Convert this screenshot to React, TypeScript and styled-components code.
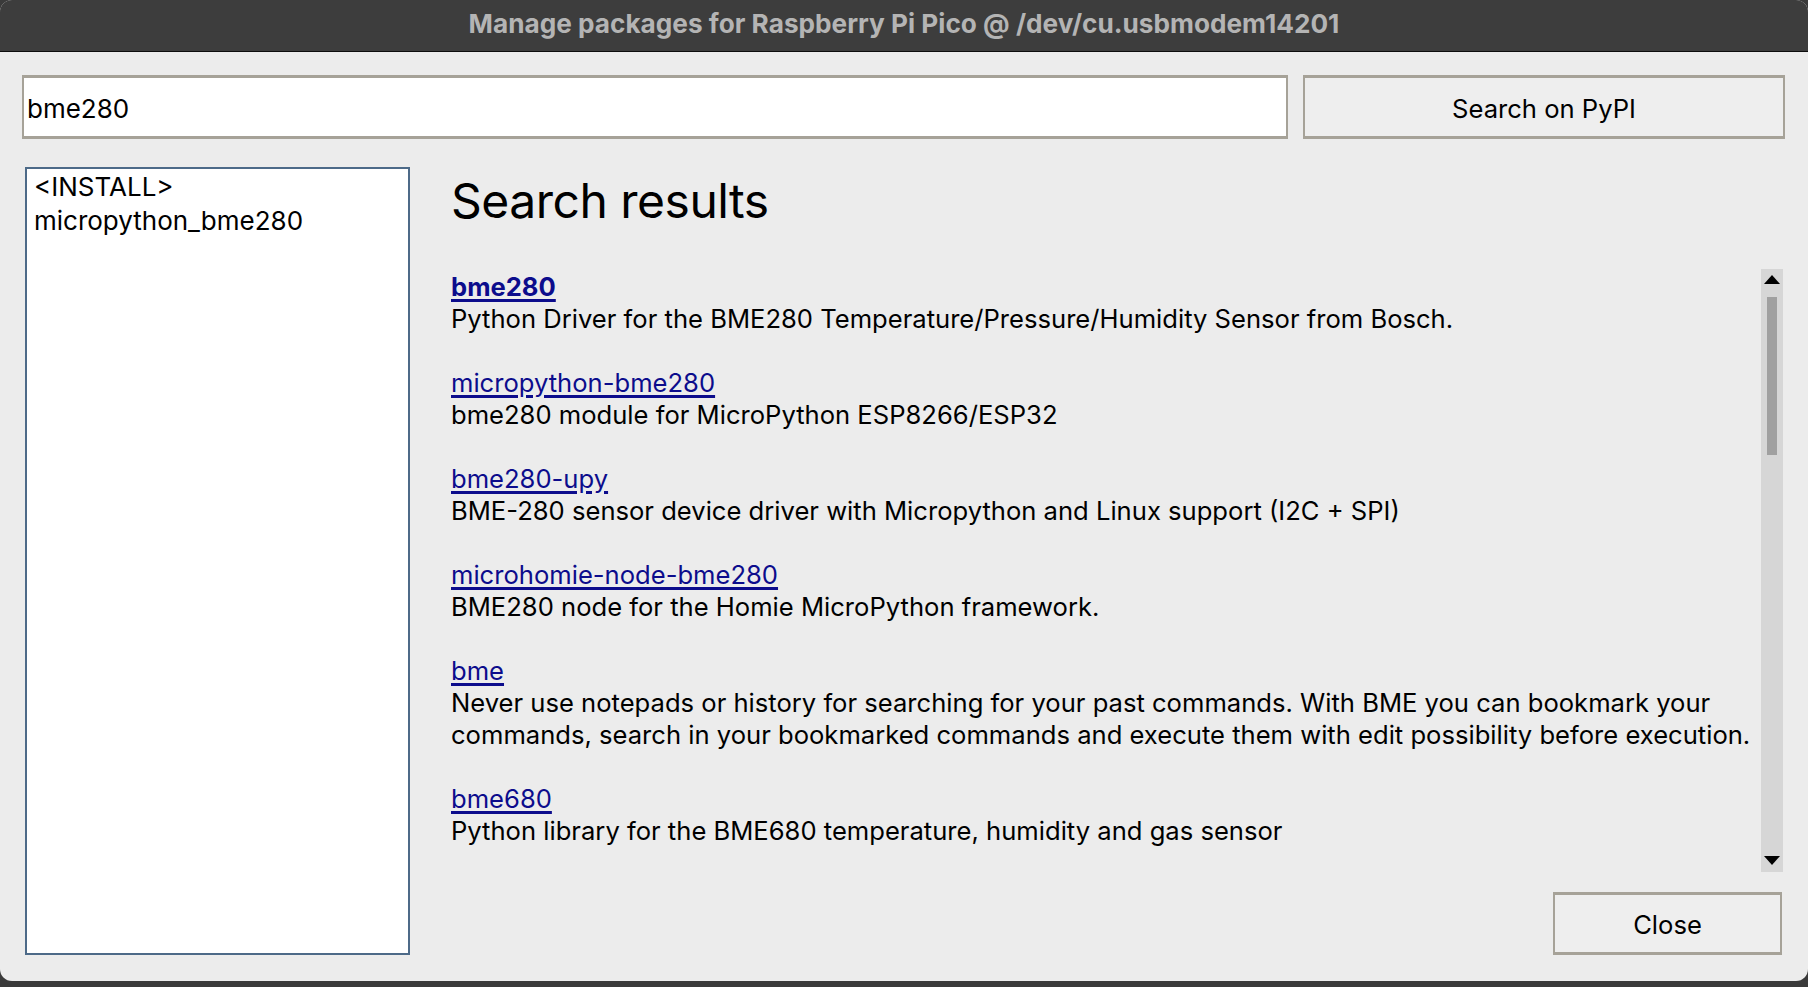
import React from 'react'
import styled, { createGlobalStyle } from 'styled-components'

const GlobalStyle = createGlobalStyle`
  html, body {
    margin: 0;
    padding: 0;
    background: #3a3a3a;
  }
  body {
    font-family: Inter, "Liberation Sans", sans-serif;
    color: #000;
  }
`

const Window = styled.div`
  width: 1808px;
  height: 981px;
  background: #ececec;
  border-radius: 12px;
  overflow: hidden;
  display: flex;
  flex-direction: column;
`

const TitleBar = styled.div`
  height: 52px;
  box-sizing: border-box;
  padding-bottom: 4px;
  flex: none;
  background: #3d3d3d;
  border-bottom: 1px solid #0d0d0d;
  display: flex;
  align-items: center;
  justify-content: center;
  color: #b4b4b4;
  font-weight: 700;
  font-size: 26.2px;
`

const Body = styled.div`
  flex: 1;
  display: flex;
  flex-direction: column;
  padding: 23px 23px 26px 22px;
  min-height: 0;
`

const SearchRow = styled.div`
  display: flex;
  gap: 15px;
  height: 64px;
  flex: none;
`

const SearchInput = styled.div`
  flex: 1;
  background: #fff;
  border: 2px solid #a6a298;
  border-top-width: 3px;
  border-bottom-width: 3px;
  display: flex;
  align-items: center;
  padding: 2px 0 0 3px;
  font-size: 26px;
`

const Button = styled.div<{ $width: number }>`
  width: ${({ $width }) => $width}px;
  box-sizing: border-box;
  background: #eeeeee;
  border: 2px solid #a6a298;
  border-top-width: 3px;
  border-bottom-width: 3px;
  display: flex;
  align-items: center;
  justify-content: center;
  padding-top: 2px;
  font-size: 25.6px;
`

const Main = styled.div`
  flex: 1;
  display: flex;
  margin-top: 28px;
  min-height: 0;
`

const ListBox = styled.div`
  width: 385px;
  box-sizing: border-box;
  margin-left: 3px;
  background: #fff;
  border: 2px solid #4d6a88;
  padding: 1px 0 0 7px;
`

const ListItem = styled.div`
  font-size: 26px;
  line-height: 34px;
`

const Pane = styled.div`
  flex: 1;
  display: flex;
  flex-direction: column;
  margin-left: 41px;
  min-height: 0;
`

const Heading = styled.h1`
  margin: 4px 0 38px;
  font-size: 48px;
  line-height: 60px;
  font-weight: 400;
  letter-spacing: -0.5px;
`

const ResultsRow = styled.div`
  flex: 1;
  display: flex;
  min-height: 0;
`

const Results = styled.div`
  flex: 1;
  overflow: hidden;
  padding-top: 2px;
  font-size: 25.6px;
  line-height: 32px;
`

const Entry = styled.div`
  margin-bottom: 32px;
`

const PkgLink = styled.a<{ $bold?: boolean }>`
  display: inline-block;
  color: #0c0c8c;
  font-weight: ${({ $bold }) => ($bold ? 700 : 400)};
  text-decoration: underline;
  text-decoration-thickness: 3px;
  text-underline-offset: 3px;
`

const Desc = styled.div``

const ScrollBar = styled.div`
  width: 22px;
  flex: none;
  background: #d6d6d6;
  display: flex;
  flex-direction: column;
  align-items: center;
  margin-right: 2px;
`

const Arrow = styled.svg<{ $down?: boolean }>`
  width: 18px;
  height: 11px;
  flex: none;
  margin: ${({ $down }) => ($down ? '0 0 6px' : '5px 0 0')};
`

const Thumb = styled.div`
  width: 10px;
  height: 158px;
  background: #a0a0a0;
  margin-top: 12px;
`

const Spacer = styled.div`
  flex: 1;
`

const Footer = styled.div`
  display: flex;
  justify-content: flex-end;
  margin-top: 20px;
  height: 63px;
  flex: none;
  padding-right: 3px;
`

const results = [
  {
    name: 'bme280',
    bold: true,
    desc: ['Python Driver for the BME280 Temperature/Pressure/Humidity Sensor from Bosch.'],
  },
  { name: 'micropython-bme280', desc: ['bme280 module for MicroPython ESP8266/ESP32'] },
  { name: 'bme280-upy', desc: ['BME-280 sensor device driver with Micropython and Linux support (I2C + SPI)'] },
  { name: 'microhomie-node-bme280', desc: ['BME280 node for the Homie MicroPython framework.'] },
  {
    name: 'bme',
    desc: [
      'Never use notepads or history for searching for your past commands. With BME you can bookmark your',
      'commands, search in your bookmarked commands and execute them with edit possibility before execution.',
    ],
  },
  { name: 'bme680', desc: ['Python library for the BME680 temperature, humidity and gas sensor'] },
]

const App = () => (
  <>
    <GlobalStyle />
    <Window>
      <TitleBar>Manage packages for Raspberry Pi Pico @ /dev/cu.usbmodem14201</TitleBar>
      <Body>
        <SearchRow>
          <SearchInput>bme280</SearchInput>
          <Button $width={482}>Search on PyPI</Button>
        </SearchRow>
        <Main>
          <ListBox>
            <ListItem>&lt;INSTALL&gt;</ListItem>
            <ListItem>micropython_bme280</ListItem>
          </ListBox>
          <Pane>
            <Heading>Search results</Heading>
            <ResultsRow>
              <Results>
                {results.map((r) => (
                  <Entry key={r.name}>
                    <PkgLink $bold={r.bold}>{r.name}</PkgLink>
                    {r.desc.map((line) => (
                      <Desc key={line}>{line}</Desc>
                    ))}
                  </Entry>
                ))}
              </Results>
              <ScrollBar>
                <Arrow viewBox="0 0 18 11">
                  <path d="M9 1 L17 10 L1 10 Z" fill="#000" />
                </Arrow>
                <Thumb />
                <Spacer />
                <Arrow viewBox="0 0 18 11" $down>
                  <path d="M1 1 L17 1 L9 10 Z" fill="#000" />
                </Arrow>
              </ScrollBar>
            </ResultsRow>
            <Footer>
              <Button $width={229}>Close</Button>
            </Footer>
          </Pane>
        </Main>
      </Body>
    </Window>
  </>
)

export default App
